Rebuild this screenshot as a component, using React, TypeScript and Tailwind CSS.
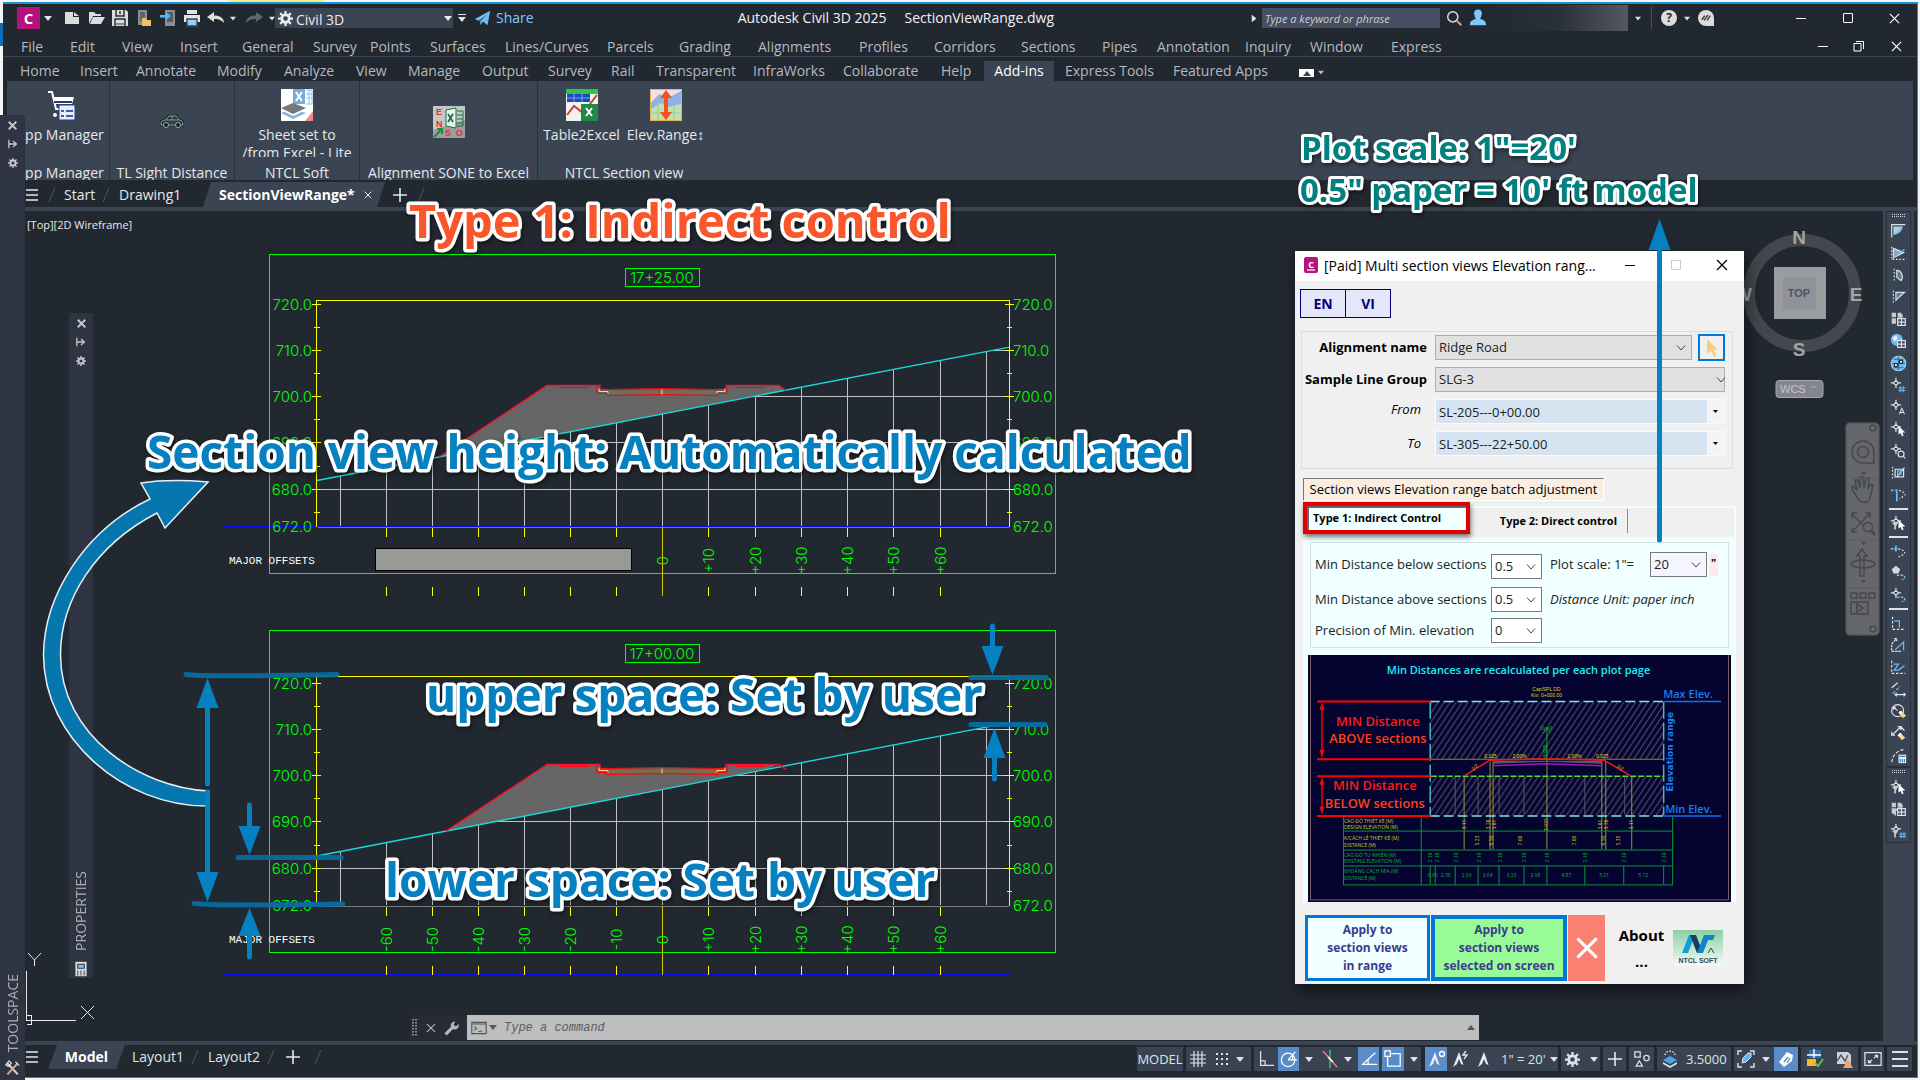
import React from 'react';

const OS = 'font-["Open_Sans",sans-serif]';

/* ---------- small shared pieces ---------- */

function Caret({ className = '' }: { className?: string }) {
  return (
    <svg viewBox="0 0 8 5" className={`h-[5px] w-2 shrink-0 ${className}`} fill="currentColor" aria-hidden="true">
      <path d="M0 0H8L4 5Z" />
    </svg>
  );
}

function Icon({ children, className = 'size-5', vb = '0 0 20 20' }: { children: React.ReactNode; className?: string; vb?: string }) {
  return (
    <svg viewBox={vb} className={`shrink-0 ${className}`} fill="none" stroke="currentColor" strokeWidth="1.4" aria-hidden="true">
      {children}
    </svg>
  );
}

function Btn({ label, className = '', children }: { label: string; className?: string; children: React.ReactNode }) {
  return (
    <button type="button" aria-label={label} className={`flex shrink-0 items-center justify-center ${className}`}>
      {children}
    </button>
  );
}

const Gear = ({ className = 'size-4' }: { className?: string }) => (
  <svg viewBox="0 0 16 16" className={`shrink-0 ${className}`} fill="none" stroke="currentColor" aria-hidden="true">
    <circle cx="8" cy="8" r="4" strokeWidth="3" />
    <path d="M8 0V3M8 13V16M0 8H3M13 8H16M2.3 2.3L4.5 4.5M11.5 11.5L13.7 13.7M2.3 13.7L4.5 11.5M11.5 4.5L13.7 2.3" strokeWidth="2.4" />
  </svg>
);

const Cross = ({ className = 'size-3' }: { className?: string }) => (
  <svg viewBox="0 0 12 12" className={`shrink-0 ${className}`} fill="none" stroke="currentColor" strokeWidth="1.3" aria-hidden="true">
    <path d="M1 1L11 11M11 1L1 11" />
  </svg>
);

/* ---------- title bar ---------- */

function TitleBar() {
  return (
    <header className="flex h-7 items-center text-[#dfe3e8]">
      <Btn label="Application menu" className="ml-[14px] h-[22px] w-[23px] bg-[#b5127f]">
        <span className="text-[15px] leading-none font-bold text-white">C</span>
      </Btn>
      <Caret className="ml-1" />
      <Btn label="New" className="ml-2 w-6">
        <Icon><path d="M3 4H11V9H17V16H3Z" fill="#dcdcdc" stroke="none" /><path d="M12 4L17 8H12Z" fill="#dcdcdc" stroke="none" /></Icon>
      </Btn>
      <Btn label="Open" className="w-6">
        <Icon><path d="M3 16V4H8L10 6H15V8H7Z" fill="#dcdcdc" stroke="none" /><path d="M7 9H19L15 16H4Z" fill="#dcdcdc" stroke="none" /></Icon>
      </Btn>
      <Btn label="Save" className="w-6">
        <Icon><path d="M2 2H16L18 4V18H2Z" fill="#dcdcdc" stroke="none" /><path d="M6 2V8H14V2M10 3V6M5 18V11H15V18" stroke="#222830" /><path d="M6 16H14" stroke="#5a6270" /></Icon>
      </Btn>
      <Btn label="Open from web and mobile" className="w-6">
        <Icon><rect x="4" y="2" width="9" height="15" fill="#8b8f94" stroke="none" /><path d="M6 4H11V13H6Z" fill="#60656c" stroke="none" /><path d="M8 18V10H12L13 12H17V18Z" fill="#f0c069" stroke="none" /></Icon>
      </Btn>
      <Btn label="Save to web and mobile" className="w-6">
        <Icon><rect x="7" y="2" width="10" height="16" fill="#8b8f94" stroke="none" /><path d="M9 4H15V14H9Z" fill="#555b64" stroke="none" /><path d="M2 7H8V4L13 8L8 12V9.5H2Z" fill="#5db7f2" stroke="none" /></Icon>
      </Btn>
      <Btn label="Plot" className="w-6">
        <Icon><path d="M5 2H15V6H5ZM2 7H18V14H2Z" fill="#e4e4e4" stroke="none" /><path d="M5 11H15V18H5Z" fill="#8fd0ff" stroke="#3b4453" /></Icon>
      </Btn>
      <Btn label="Undo" className="w-6">
        <Icon><path d="M1 9L8 4V7.500C14 7.500 18 10 18 15C15 11.500 12 11 8 11V14Z" fill="#dcdcdc" stroke="none" /></Icon>
      </Btn>
      <Caret className="ml-0.5 w-[6px]" />
      <Btn label="Redo" className="ml-1.5 w-6">
        <Icon><path d="M19 9L12 4V7.500C6 7.500 2 10 2 15C5 11.500 8 11 12 11V14Z" fill="#5f666f" stroke="none" /></Icon>
      </Btn>
      <Caret className="ml-[3px] w-[6px]" />
      <button type="button" className="flex h-5 w-[178px] items-center bg-[#3b4453] pr-px pl-[3px] text-sm text-[#e8ebef]">
        <Gear className="size-[15px]" />
        <span className="ml-[3px] pt-[3px] leading-5">Civil 3D</span>
        <Caret className="ml-auto" />
      </button>
      <span className="ml-[5px] flex flex-col items-center gap-[2px]" aria-hidden="true">
        <span className="h-px w-2 bg-current" />
        <Caret />
      </span>
      <button type="button" className="ml-2 flex items-center gap-1 text-sm text-[#7cc8ff]">
        <Icon className="size-[18px]"><path d="M1 11L18 2L15 18L10 14L7 18V13L15 6L5 13Z" fill="#6cbcf5" stroke="none" /></Icon>
        Share
      </button>
      <h1 className="ml-auto flex gap-[18px] text-sm text-[#f0f2f4]">
        <span>Autodesk Civil 3D 2025</span>
        <span>SectionViewRange.dwg</span>
      </h1>
      <Caret className="ml-[196px] -rotate-90" />
      <input
        aria-label="Search help"
        placeholder="Type a keyword or phrase"
        className="ml-1 h-5 w-[178px] bg-[#454f61] px-[3px] text-[11px] text-white italic placeholder:text-[#c9cdd3]"
      />
      <Icon className="ml-1.5 size-[17px]"><circle cx="8" cy="8" r="6" stroke="#d8dade" strokeWidth="1.800" /><path d="M13 13L18 18" stroke="#d2a06a" strokeWidth="2.500" /></Icon>
      <Icon className="ml-1.5 size-[18px]"><path d="M10 0.500C14 0.500 15 4 14 7C13.500 9 12.500 10 12.500 11C16 12 19 13 19 18H1C1 13 4 12 7.500 11C7.500 10 6.500 9 6 7C5 4 6 0.500 10 0.500Z" fill="#7cc8ff" stroke="none" /></Icon>
      <span className="h-[26px] w-[141px] bg-linear-to-r from-[#222830] via-[#2a3038] to-[#555a62]" aria-hidden="true" />
      <Caret className="ml-[7px] w-[6px]" />
      <span className="ml-2.5 h-[22px] w-px bg-[#4a505a]" />
      <Btn label="Help" className="ml-[9px] size-4 rounded-full bg-[#dcdcdc]">
        <span className="text-xs leading-none font-bold text-[#222830]">?</span>
      </Btn>
      <Caret className="ml-[7px] w-[6px]" />
      <Btn label="Autodesk account" className="ml-2 size-4 rounded-full rounded-br-none bg-[#dcdcdc]">
        <Icon className="size-3 text-[#444]"><path d="M3 13L8 6M7 14L13 5M12 14L17 6" strokeWidth="2.500" /></Icon>
      </Btn>
      <Btn label="Minimize" className="ml-[76px] w-[22px]"><span className="h-px w-2.5 bg-white" /></Btn>
      <Btn label="Maximize" className="ml-[25px] w-[22px]"><span className="size-2.5 rounded-[1px] border border-white" /></Btn>
      <Btn label="Close" className="mr-3 ml-6 w-[22px] text-white"><Cross className="size-[11px]" /></Btn>
    </header>
  );
}

/* ---------- menu bar and ribbon ---------- */

const menus: [string, string][] = [
  ['File', 'w-[49px]'], ['Edit', 'w-[52px]'], ['View', 'w-[58px]'], ['Insert', 'w-[62px]'], ['General', 'w-[71px]'],
  ['Survey', 'w-[57px]'], ['Points', 'w-[60px]'], ['Surfaces', 'w-[75px]'], ['Lines/Curves', 'w-[102px]'],
  ['Parcels', 'w-[72px]'], ['Grading', 'w-[79px]'], ['Alignments', 'w-[101px]'], ['Profiles', 'w-[75px]'],
  ['Corridors', 'w-[87px]'], ['Sections', 'w-[81px]'], ['Pipes', 'w-[55px]'], ['Annotation', 'w-[88px]'],
  ['Inquiry', 'w-[65px]'], ['Window', 'w-[81px]'], ['Express', 'w-[60px]'],
];

const ribbonTabs: [string, string][] = [
  ['Home', 'w-[60px]'], ['Insert', 'w-[56px]'], ['Annotate', 'w-[81px]'], ['Modify', 'w-[67px]'], ['Analyze', 'w-[72px]'],
  ['View', 'w-[52px]'], ['Manage', 'w-[74px]'], ['Output', 'w-[66px]'], ['Survey', 'w-[63px]'], ['Rail', 'w-[45px]'],
  ['Transparent', 'w-[97px]'], ['InfraWorks', 'w-[90px]'], ['Collaborate', 'w-[98px]'], ['Help', 'w-[43px]'],
  ['Add-ins', 'w-[70px]'], ['Express Tools', 'w-[108px]'], ['Featured Apps', 'w-[127px]'],
];

function MenuBar() {
  return (
    <nav className="flex h-[25px] items-end border-b border-[#3b4453] pl-[18px] text-sm leading-[18px] text-[#b4b9c0]">
      {menus.map(([t, w]) => (
        <button key={t} type="button" className={`${w} shrink-0 text-left whitespace-nowrap`}>{t}</button>
      ))}
      <span className="ml-auto flex items-center pb-1 text-white">
        <Btn label="Minimize drawing" className="w-[22px]"><span className="h-px w-2.5 bg-white" /></Btn>
        <Btn label="Restore drawing" className="ml-[14px] w-[22px]">
          <Icon className="size-3" vb="0 0 12 12"><path d="M1 3.500H8V11H1ZM3 1.500H10.500V9" strokeWidth="1" /></Icon>
        </Btn>
        <Btn label="Close drawing" className="mr-2.5 ml-[15px] w-[22px]"><Cross className="size-[11px]" /></Btn>
      </span>
    </nav>
  );
}

function RibbonTabs() {
  return (
    <nav className="flex h-6 items-end pl-[17px] text-sm text-[#b4b9c0]">
      {ribbonTabs.map(([t, w]) =>
        t === 'Add-ins' ? (
          <button key={t} type="button" className={`${w} h-5 shrink-0 bg-[#3b4453] text-center leading-5 text-white`}>{t}</button>
        ) : (
          <button key={t} type="button" className={`${w} h-5 shrink-0 text-left leading-5 whitespace-nowrap ${t === 'Express Tools' || t === 'Featured Apps' ? 'pl-[11px]' : ''}`}>{t}</button>
        ),
      )}
      <Btn label="Ribbon display" className="mb-1 ml-[10px] h-2 w-[15px] bg-white text-[#444]"><Caret className="h-1 w-1.5 rotate-180" /></Btn>
      <Caret className="mb-1.5 ml-1 w-[6px]" />
    </nav>
  );
}

function RibbonPanel({ title, className, children }: { title: string; className: string; children: React.ReactNode }) {
  return (
    <section className={`flex h-full shrink-0 flex-col border-r border-[#2a313c] pt-2 ${className}`}>
      <div className="flex h-[75px] shrink-0 justify-center overflow-hidden">{children}</div>
      <h2 className="text-center leading-[18px] whitespace-nowrap">{title}</h2>
    </section>
  );
}

function Tool({ icon, label, className = '' }: { icon: React.ReactNode; label?: React.ReactNode; className?: string }) {
  return (
    <button type="button" className={`flex flex-col items-center ${className}`}>
      {icon}
      {label && <span className="mt-[5px] h-[31px] overflow-hidden leading-[18px] whitespace-nowrap">{label}</span>}
    </button>
  );
}

function Ribbon() {
  return (
    <div className="mr-1 ml-1 flex h-[99px] overflow-hidden bg-[#3b4453] text-sm text-[#e6e9ed]">
      <RibbonPanel title="App Manager" className="w-[103px] pl-1">
        <Tool
          label="App Manager"
          icon={
            <svg viewBox="0 0 32 32" className="h-8 w-8" aria-hidden="true">
              <path d="M4 3H8L12 20H25" fill="none" stroke="#fff" strokeWidth="2" />
              <path d="M9 8H30L28 15H11Z" fill="#fff" />
              <path d="M10 13H28" stroke="#2b3a78" strokeWidth="2" />
              <circle cx="11" cy="26" r="2" fill="#fff" />
              <path d="M15 16H31V31H15Z" fill="#e9eef8" stroke="#27407e" />
              <path d="M17 21H20V23H17ZM17 26H20V28H17ZM22 21H29V23H22ZM22 26H29V28H22Z" fill="#2f63b5" />
            </svg>
          }
        />
      </RibbonPanel>
      <RibbonPanel title="TL Sight Distance" className="w-[125px]">
        <Tool
          className="self-center pb-3"
          icon={
            <svg viewBox="0 0 24 16" className="h-4 w-6" fill="none" stroke="#141a20" strokeWidth="2.600" aria-hidden="true">
              <path d="M1 11C1 8 3 7 6 7L9 3H16L19 7C22 7 23 9 23 12H1ZM6 7H19M12 3V7" />
              <path d="M1 11C1 8 3 7 6 7L9 3H16L19 7C22 7 23 9 23 12H1ZM6 7H19M12 3V7" stroke="#8fb3ab" strokeWidth="1" />
              <circle cx="6" cy="12" r="2.500" fill="#141a20" stroke="#8fb3ab" strokeWidth="1" />
              <circle cx="18" cy="12" r="2.500" fill="#141a20" stroke="#8fb3ab" strokeWidth="1" />
            </svg>
          }
        />
      </RibbonPanel>
      <RibbonPanel title="NTCL Soft" className="w-[125px]">
        <Tool
          label={<>Sheet set to<br />/from Excel - Lite</>}
          icon={
            <svg viewBox="0 0 32 32" className="h-8 w-8" aria-hidden="true">
              <rect width="32" height="32" fill="#fff" />
              <path d="M12 0H24V15H12Z" fill="#74acdf" />
              <path d="M15 3L21 12M21 3L15 12" stroke="#fff" strokeWidth="2" />
              <path d="M25 1H31V15H25M25 5H31M25 9H31M28 1V15" fill="none" stroke="#8fc0ea" />
              <path d="M0 24L12 20L25 24L12 30Z" fill="#86b5e0" />
              <path d="M0 21L12 17L25 21L12 27Z" fill="#fff" />
              <path d="M0 19L12 14L25 19L12 25Z" fill="#777" />
              <path d="M24 32L32 22V32Z" fill="#e64a4a" opacity=".65" />
            </svg>
          }
        />
      </RibbonPanel>
      <RibbonPanel title="Alignment SONE to Excel" className="w-[178px]">
        <Tool
          className="pt-[17px]"
          icon={
            <svg viewBox="0 0 32 32" className="h-8 w-8" aria-hidden="true">
              <rect width="32" height="32" fill="#9a9c9e" />
              <path d="M0 0H32V14L0 24Z" fill="#c4c6c7" />
              <path d="M13 4L23 2V22L13 20Z" fill="#e9f1ec" stroke="#1e7145" />
              <path d="M15 8L20 16M20 8L15 16" stroke="#1e7145" strokeWidth="1.800" />
              <path d="M24 5H30V20H24M24 9H30M24 13H30M24 17H30" fill="none" stroke="#1e7145" />
              <path d="M1 31L9 23M4 23H9V28" stroke="#1a8f3c" strokeWidth="2" fill="none" />
              <g fill="#f02a2a" fontFamily="Liberation Sans" fontSize="9" fontWeight="700">
                <text x="3" y="9">E</text><text x="3" y="21">N</text><text x="12" y="30">S</text><text x="23" y="30">O</text>
              </g>
            </svg>
          }
        />
      </RibbonPanel>
      <section className="flex w-[172px] shrink-0 flex-col pt-2">
        <div className="flex h-[75px] shrink-0 overflow-hidden">
          <Tool
            className="w-[87px]"
            label="Table2Excel"
            icon={
              <svg viewBox="0 0 32 32" className="h-8 w-8" aria-hidden="true">
                <rect width="32" height="32" fill="#f1f3ee" />
                <path d="M0 0H32V5H0Z" fill="#35c24a" />
                <path d="M1 5H24V13H1Z" fill="#1a49c4" />
                <path d="M1 9H24M8 5V13M16 5V13" stroke="#7fa2ef" />
                <path d="M1 26L8 17L17 24L31 6" fill="none" stroke="#d23b3b" strokeWidth="2" />
                <path d="M15 15H32V32H15Z" fill="#1e8a43" />
                <path d="M20 19L26 27M26 19L20 27" stroke="#fff" strokeWidth="2" />
              </svg>
            }
          />
          <Tool
            className="w-[81px]"
            label="Elev.Range↕"
            icon={
              <svg viewBox="0 0 32 32" className="h-8 w-8" aria-hidden="true">
                <rect x=".5" y=".5" width="31" height="31" fill="#f7dfe2" stroke="#eab25a" />
                <path d="M1 14L9 5L18 9L31 2V31H1Z" fill="#8fb2e2" />
                <path d="M1 20L11 14L19 18L31 15V31H1Z" fill="#bfe0b0" />
                <path d="M1 24H31M8 14V31M24 16V31" stroke="#9ccb90" />
                <path d="M16 1L22 9H18V23H22L16 31L10 23H14V9H10Z" fill="#f4511e" />
              </svg>
            }
          />
        </div>
        <h2 className="text-center leading-[18px]">NTCL Section view</h2>
      </section>
    </div>
  );
}

/* ---------- document tabs ---------- */

const Slash = () => (
  <svg viewBox="0 0 8 16" className="h-4 w-2 shrink-0" stroke="#4d5562" aria-hidden="true"><path d="M7 1L1 15" /></svg>
);
const Burger = () => (
  <svg viewBox="0 0 12 12" className="size-3 shrink-0" stroke="#e6e9ed" strokeWidth="1.600" aria-hidden="true"><path d="M0 1H12M0 6H12M0 11H12" /></svg>
);
const Plus = () => (
  <svg viewBox="0 0 14 14" className="size-3.5 shrink-0" stroke="#e6e9ed" strokeWidth="1.600" aria-hidden="true"><path d="M7 0V14M0 7H14" /></svg>
);

function DocTabs() {
  return (
    <nav className="flex h-[31px] items-center border-b-4 border-[#3b4453] pt-0.5 pl-[23px] text-sm text-[#e6e9ed]">
      <Btn label="Drawing list"><Burger /></Btn>
      <span className="ml-2.5"><Slash /></span>
      <button type="button" className="ml-2 w-[38px] text-left">Start</button>
      <Slash />
      <button type="button" className="ml-[9px] w-[84px] text-left">Drawing1</button>
      <button type="button" className="flex h-[25px] w-[182px] items-center justify-between self-end bg-[#3b4453] pr-[13px] pl-4 font-bold text-white [clip-path:polygon(8px_0,100%_0,calc(100%-8px)_100%,0_100%)]">
        SectionViewRange*
        <Cross className="size-2" />
      </button>
      <Btn label="New drawing" className="ml-2"><Plus /></Btn>
      <span className="ml-2.5"><Slash /></span>
    </nav>
  );
}

/* ---------- section views drawing ---------- */

const colX = [340, 386, 432, 478, 524, 570, 616, 662, 708, 755, 801, 847, 893, 940, 986];
const offsetNames = ['', '-60', '-50', '-40', '-30', '-20', '-10', '0', '+10', '+20', '+30', '+40', '+50', '+60', ''];

function SectionView({ station, top, frameTop, y720, ground, hideLeft }: { station: string; top: number; frameTop: number; y720: number; ground: number; hideLeft?: boolean }) {
  const elev = (e: number) => Math.round(y720 + (720 - e) * 4.63) + 0.5;
  const gy = (x: number) => ground - (x - 662) * 0.1927;
  const gx = (y: number) => 662 + (ground - y) / 0.1927;
  const base = elev(672);
  const r = elev(702.4);
  const toe = Math.round((r - ground + 240) / 0.482);
  return (
    <g fill="none" shapeRendering="crispEdges">
      {colX.map((x) => <path key={x} d={`M${x + 0.5} ${gy(x)}V${base}`} stroke="#bfc1c4" />)}
      {[680, 690, 700, 710].map((e) => <path key={e} d={`M${Math.max(317, gx(elev(e)))} ${elev(e)}H1009`} stroke="#bfc1c4" />)}
      <path d={`M317 ${base + 1}H1009`} stroke="#777" />
      <path d={`M${toe} ${gy(toe)}L547 ${r}H600V${r + 4}H607L662 ${r + 3}L718 ${r + 4}H726V${r}H779L${gx(r + 5)} ${r + 5}Z`} fill="#666" shapeRendering="auto" />
      <g shapeRendering="auto">
        <path d={`M317 ${gy(317)}L1009.500 ${gy(1009)}`} stroke="#19dada" strokeWidth="1.400" />
        <path d={`M608 ${r + 7}H717`} stroke="#7d6c48" strokeWidth="3" />
        <path d={`M${toe} ${gy(toe)}L547 ${r}H600V${r + 4}H607M718 ${r + 4}H726V${r}H779L786 ${r + 5}`} stroke="#f3122d" strokeWidth="1.400" />
        <path d={`M560 ${r + 2}H590M736 ${r + 2}H766M597 ${r + 1}V${r + 8}H607V${r + 10}L662 ${r + 9}L718 ${r + 10}V${r + 8}H727V${r + 1}M607 ${r + 4}L662 ${r + 3}L718 ${r + 4}`} stroke="#ff0014" strokeWidth="1.200" />
        <path d={`M599 ${r + 3}V${r + 6}H608V${r + 8}M725 ${r + 3}V${r + 6}H717V${r + 8}M662 ${r + 4}V${r + 9}`} stroke="#ffe066" />
      </g>
      <path d={`M317 ${base}H1009.500V${base + 69}H223.500V${base}H317V${base + 69}`} stroke="#0b0bff" />
      <rect x="269.500" y={frameTop + 0.5} width="786" height={base + 46 - frameTop} stroke="#00ff00" />
      <path d={`M316.500 ${base}V${top}H1009.500V${base}`} stroke="#ffff00" />
      {[720, 710, 700, 690, 680].map((e) => <path key={e} d={`M312 ${elev(e)}H321M1005 ${elev(e)}H1014`} stroke="#ffff00" />)}
      {[715, 705, 695, 685, 675].map((e) => <path key={e} d={`M314 ${elev(e)}H320M1007 ${elev(e)}H1012`} stroke="#ffff00" />)}
      {colX.slice(1, 14).map((x) => <path key={x} d={`M${x + 0.5} ${base + 1}V${base + 10}M${x + 0.5} ${base + 60}V${base + 69}`} stroke="#ffff00" />)}
      <path d={`M662.500 ${base}V${base + 69}`} stroke="#d6c800" />
      <rect x="625.500" y={frameTop + 14.5} width="74" height="18" stroke="#00ff00" />
      <g fill="#00ff00" fontFamily="Inter, sans-serif" fontSize="15" fontWeight="300" shapeRendering="auto">
        <text x="662" y={frameTop + 29} textAnchor="middle">{station}</text>
        {[720, 710, 700, 690, 680, 672].map((e) => (
          <React.Fragment key={e}>
            <text x="312" y={elev(e) + 5} textAnchor="end">{e}.0</text>
            <text x="1013" y={elev(e) + 5}>{e}.0</text>
          </React.Fragment>
        ))}
        {offsetNames.map((t, i) => t && !(hideLeft && i < 7) && (
          <text key={t} transform={`translate(${colX[i] + 6} ${base + 34}) rotate(-90)`} textAnchor="middle">{t}</text>
        ))}
      </g>
      <text x="229" y={base + 37} fill="#fff" fontFamily="Liberation Mono, monospace" fontSize="11">MAJOR OFFSETS</text>
      {hideLeft && <rect x="375.500" y={base + 22} width="256" height="22" fill="#999" stroke="#000" />}
    </g>
  );
}

function Drawing() {
  return (
    <svg viewBox="3 211 1880 830" className="absolute top-0 left-0 h-[830px] w-[1880px]" role="img" aria-label="Section views">
      <SectionView station="17+25.00" top={300.5} frameTop={254} y720={303.5} ground={414} hideLeft />
      <SectionView station="17+00.00" top={676.5} frameTop={630} y720={682.5} ground={789.5} />
      <g stroke="#e6e9ed" fill="none" shapeRendering="crispEdges">
        <path d="M26.500 971V1020.500H76M26.500 1015.500H31.500V1024.500H26.500" />
        <path d="M28 953L34.500 960L41 953M34.500 960V966M81 1006L94 1019M94 1006L81 1019" shapeRendering="auto" />
      </g>
      {/* view cube */}
      <circle cx="1802" cy="293" r="53" fill="none" stroke="#44474d" strokeWidth="12" />
      <rect x="1774" y="267" width="52" height="52" fill="#9b9c9d" />
      <rect x="1783" y="277" width="33" height="32" fill="#8e939a" />
      <g fontFamily="Liberation Sans, sans-serif" fontWeight="700" textAnchor="middle" fill="#a2a4a6">
        <text x="1799" y="297" fontSize="11" fill="#4f545c">TOP</text>
        <text x="1799" y="244" fontSize="19">N</text>
        <text x="1799" y="356" fontSize="19">S</text>
        <text x="1856" y="301" fontSize="19">E</text>
        <text x="1743" y="301" fontSize="19">W</text>
      </g>
      <rect x="1776" y="380.500" width="47" height="17" rx="3" fill="#84858f" stroke="#a6a7ad" />
      <text x="1780" y="393" fontSize="11" fontFamily="Liberation Sans, sans-serif" fill="#c5c6cc">WCS</text>
      <path d="M1811 387H1817" stroke="#b0b1b8" />
      {/* navigation bar */}
      <g fill="none" stroke="#45484c" strokeWidth="1.500">
        <rect x="1846" y="423" width="33" height="212" rx="4" fill="#65676a" stroke="#53565a" />
        <circle cx="1873" cy="428" r="3" /><circle cx="1873" cy="629" r="3" />
        <path d="M1874 452A11 11 0 1 0 1863 463H1874Z" /><circle cx="1863" cy="452" r="5.500" />
        <path d="M1855 494C1852 490 1851 487 1853 486L1857 490L1855 480L1858 480L1860 488V477H1863L1864 488L1866 478H1869L1868 489L1871 484L1873 485L1870 498C1868 504 1860 505 1855 494Z" />
        <path d="M1852 514L1870 532M1870 513L1852 532M1852 518V513H1857M1865 513H1870V518M1852 528V532H1857" /><circle cx="1868" cy="527" r="4.500" fill="#65676a" /><path d="M1871 531L1875 535" strokeWidth="2.500" />
        <ellipse cx="1863" cy="564" rx="12" ry="4" /><path d="M1860 576V556H1857L1862 549L1867 556H1864V576Z" />
        <path d="M1851 593H1857V598H1851ZM1860 593H1866V598H1860ZM1869 593H1875V598H1869ZM1851 602H1868V614H1851ZM1857 604V612L1863 608Z" />
        <path d="M1847 478H1878M1847 540H1878M1847 588H1878" stroke="#5b5d60" strokeWidth="1" />
      </g>
      <path d="M1861 472H1866L1863.500 475ZM1861 542H1866L1863.500 545ZM1861 580H1866L1863.500 583Z" fill="#44474b" />
    </svg>
  );
}

/* ---------- dialog ---------- */

const Chevron = ({ className = '' }: { className?: string }) => (
  <svg viewBox="0 0 10 6" className={`pointer-events-none absolute h-1.5 w-2.5 ${className}`} fill="none" stroke="#444" aria-hidden="true"><path d="M1 .5L5 5L9 .5" /></svg>
);

function Combo({ id, value, className }: { id: string; value: string; className: string }) {
  return (
    <span className="relative flex items-center">
      <select id={id} defaultValue={value} className={`appearance-none pl-[3px] text-[13px] text-[#222] ${className}`}>
        <option>{value}</option>
      </select>
      <Chevron className="right-1.5" />
    </span>
  );
}

function StationBox({ id, value }: { id: string; value: string }) {
  return (
    <span className="flex h-[25px] w-[290px] border border-[#f8fafc] bg-[#d6e4f2]">
      <input id={id} defaultValue={value} className="min-w-0 flex-1 bg-transparent px-[3px] pt-0.5 text-[13px] text-[#222]" />
      <Btn label={`Choose ${value}`} className="w-[17px] bg-[#f4f4f6] text-black"><Caret className="h-[3px] w-[5px]" /></Btn>
    </span>
  );
}

const values1: [number, string][] = [[157, '3.11'], [181, '3.78'], [187, '3.81'], [240, '3.935'], [294, '3.81'], [300, '3.78'], [325, '3.11']];
const values2: [number, string][] = [[170, '5.23'], [184, '0.50'], [214, '7.00'], [268, '7.00'], [297, '0.50'], [312, '5.35']];
const values3 = [123, 130, 149, 172, 193, 218, 241, 279, 318, 358];
const values4: [number, string][] = [[125, '0.60'], [138, '2.38'], [159, '2.93'], [180, '2.64'], [204, '3.23'], [228, '2.98'], [259, '4.87'], [297, '5.01'], [336, '5.12']];

function Preview() {
  return (
    <svg viewBox="0 0 424 248" className="block w-full" role="img" aria-label="Minimum distances above and below sections">
      <defs>
        <pattern id="hatch" width="6" height="9" patternUnits="userSpaceOnUse">
          <path d="M-1 10.500L7 -1.500M-4 6L1 -1.500M5 10.500L10 3" stroke="#80838d" strokeWidth=".8" />
        </pattern>
      </defs>
      <rect width="424" height="248" fill="#050330" />
      <path d="M2.500 0V245.500H421.500V0" fill="none" stroke="#77605f" />
      <text x="211" y="19" textAnchor="middle" fill="#19f0f5" fontFamily="Open Sans" fontSize="11" fontWeight="600">Min Distances are recalculated per each plot page</text>
      <g fontFamily="Liberation Sans" fontSize="5" fill="#d8d82a" textAnchor="middle">
        <text x="239" y="36">Cap/SPL DD</text><text x="239" y="42">Km: 0+000.00</text>
      </g>
      <rect x="123" y="47" width="234" height="57" fill="url(#hatch)" />
      <rect x="123" y="122" width="234" height="39" fill="url(#hatch)" />
      <path d="M123 104.500H357" stroke="#b5762d" />
      <path d="M147.500 122V160M170.500 122V160M191.500 122V160M216.500 122V160M277.500 122V160M317.500 122V160" stroke="#55576b" />
      <path d="M156.500 122V176M182.500 107V195M185.500 107V195M294.500 107V195M298.500 107V195M324.500 122V195M239.500 104V195M156.500 176V195" stroke="#9c9140" />
      <path d="M123 121.500H357" stroke="#57d83c" strokeDasharray="6 2" strokeWidth="1.500" />
      <path d="M122.500 47V161M356.500 47V161" stroke="#44b8c4" strokeDasharray="17 4" strokeWidth="1.500" />
      <path d="M122 46.500H357M122 161.500H357" stroke="#7fe6ea" strokeDasharray="10 4" strokeWidth="1.500" />
      <path d="M185 106H295V109L239 107L185 109Z" fill="#555a68" />
      <path d="M185 111L239 109L295 111" fill="none" stroke="#a018b8" strokeWidth="1.500" />
      <path d="M157 121L182 105.500L239 104L297 105.500L323 121" fill="none" stroke="#f01818" strokeWidth="1.500" />
      <path d="M239.500 75V104M236 78L239.500 73L243 78" fill="none" stroke="#17a82c" />
      <g fontFamily="Liberation Sans" fontSize="5" fill="#e0d820" textAnchor="middle">
        <text x="183" y="103">0.025</text><text x="212" y="103">2.00%</text><text x="267" y="103">2.00%</text><text x="295" y="103">0.025</text>
        <text x="168" y="114" transform="rotate(-35 168 114)">1/2</text><text x="312" y="114" transform="rotate(35 312 114)">1/2</text>
        <text x="239" y="75" fill="#17a82c">Dc=0</text>
        <text transform="translate(240 96) rotate(-90)" fill="#17c82c">3.935</text>
      </g>
      <path d="M9 46.500H123M9 104.500H123M9 121.500H123M9 161.500H123" stroke="#ff0000" strokeWidth="2" />
      <path d="M14 50V101M14 125V158" stroke="#ff0000" strokeWidth="1.500" />
      <path d="M14 47L11.500 55H16.500ZM14 103L11.500 95H16.500ZM14 122L11.500 130H16.500ZM14 160L11.500 152H16.500Z" fill="#ff0000" />
      <g fontFamily="Open Sans" fontSize="13" fontWeight="600" textAnchor="middle">
        <text x="70" y="71" fill="#ff1a12">MIN Distance</text><text x="70" y="88" fill="#fb4313">ABOVE sections</text>
        <text x="67" y="135" fill="#ff1a12">MIN Distance</text><text x="67" y="153" fill="#fb4313">BELOW sections</text>
      </g>
      <g fontFamily="Open Sans" fontSize="11" fontWeight="600" fill="#1580f5">
        <text x="356" y="43">Max Elev.</text><text x="358" y="158">Min Elev.</text>
        <text transform="translate(366 97) rotate(-90)" textAnchor="middle" fontFamily="DejaVu Sans" fontSize="9" fontWeight="700">Elevation range</text>
      </g>
      <path d="M357 46.500H414M357 161.500H414" stroke="#0b74ee" strokeWidth="1.500" />
      <path d="M35.500 162V230.500H365.500V162M35.500 176.500H365.500M35.500 195.500H365.500M35.500 211.500H365.500M113.500 162V230.500" fill="none" stroke="#0a9a35" />
      <path d="M122.500 211V230M127.500 211V230M147.500 211V230M170.500 211V230M191.500 211V230M216.500 211V230M239.500 211V230M277.500 211V230M316.500 211V230M356.500 211V230" stroke="#0a9a35" />
      <g fontFamily="Open Sans" fontSize="5" fill="#d0cc22">
        <text x="36" y="168">CAO ĐỘ THIẾT KẾ (M)</text><text x="36" y="174">DESIGN ELEVATION (M)</text>
        <text x="36" y="185">K/CÁCH LẺ THIẾT KẾ (M)</text><text x="36" y="192">DISTANCE (M)</text>
        <g textAnchor="middle">
          {values1.map(([x, t]) => <text key={x} transform={`translate(${x + 1} 170) rotate(-90)`}>{t}</text>)}
          {values2.map(([x, t]) => <text key={x} transform={`translate(${x + 1} 186) rotate(-90)`}>{t}</text>)}
        </g>
      </g>
      <g fontFamily="Open Sans" fontSize="5" fill="#12b03a">
        <text x="36" y="202">CAO ĐỘ TỰ NHIÊN (M)</text><text x="36" y="209">EXISTING ELEVATION (M)</text>
        <text x="36" y="219">KHOẢNG CÁCH MIA (M)</text><text x="36" y="226">DISTANCE (M)</text>
        <g textAnchor="middle">
          {values3.map((x) => <text key={x} transform={`translate(${x + 1} 203) rotate(-90)`}>2.18</text>)}
          {values4.map(([x, t]) => <text key={x} x={x} y="223">{t}</text>)}
        </g>
      </g>
    </svg>
  );
}

function Dialog() {
  return (
    <section
      role="dialog"
      aria-label="Multi section views Elevation range"
      className="absolute top-10 left-[1292px] flex w-[449px] flex-col bg-[#f0f0f0] text-[13px] text-black shadow-[2px_6px_16px_rgba(0,0,0,0.55)]"
    >
      <header className="flex h-[30px] items-center bg-white pr-4 pb-0.5 pl-[9px]">
        <span className="flex h-4 w-3.5 flex-col items-center justify-center rounded-[2px] bg-[#b5127f] text-[9px] leading-[9px] font-bold text-white">C<span className="h-[2px] w-2 bg-[#e7a6ce]" /></span>
        <h2 className="ml-1.5 text-[14px] whitespace-nowrap">[Paid] Multi section views Elevation rang...</h2>
        <Btn label="Minimize dialog" className="ml-auto w-3"><span className="h-px w-2.5 bg-black" /></Btn>
        <Btn label="Maximize dialog" className="ml-[34px] w-3"><span className="size-2.5 border border-[#ccc]" /></Btn>
        <Btn label="Close dialog" className="ml-[34px]"><Cross /></Btn>
      </header>
      <div className="flex pt-2 pl-[5px] font-bold text-[#00007e]">
        <button type="button" className="h-[29px] w-[46px] border border-[#00007e] bg-[#e6e6fa] text-sm">EN</button>
        <button type="button" className="-ml-px h-[29px] w-[46px] border border-[#00007e] bg-[#e6e6fa] text-sm">VI</button>
      </div>
      <form className="mt-[13px] mr-[11px] ml-1.5 grid h-[138px] grid-cols-[125px_1fr] content-start items-center gap-x-2 gap-y-[7px] border border-[#dcdcdc] pt-[3px]">
        <label htmlFor="alignment" className="text-right font-bold whitespace-nowrap">Alignment name</label>
        <span className="flex gap-1.5">
          <Combo id="alignment" value="Ridge Road" className="h-[25px] w-[257px] border border-[#adadad] bg-[#e1e1e1]" />
          <Btn label="Pick alignment" className="-my-px size-[27px] border-2 border-[#0078d7] bg-[#f0f0f0]">
            <Icon className="size-5"><path d="M5 1V16L9 12.500L12 19L14.500 18L11.500 11.500H16Z" fill="#f6cd82" stroke="none" /></Icon>
          </Btn>
        </span>
        <label htmlFor="slg" className="text-right font-bold whitespace-nowrap">Sample Line Group</label>
        <Combo id="slg" value="SLG-3" className="h-[25px] w-[290px] border border-[#adadad] bg-[#e1e1e1]" />
        <label htmlFor="from" className="pr-1.5 pb-1 text-right italic">From</label>
        <StationBox id="from" value="SL-205---0+00.00" />
        <label htmlFor="to" className="pr-1.5 text-right italic">To</label>
        <StationBox id="to" value="SL-305---22+50.00" />
      </form>
      <h3 className="mt-[9px] ml-2 h-[23px] w-[301px] border border-t-[#777] border-r-white border-b-white border-l-[#777] bg-[#faeee2] text-center leading-[21px] whitespace-nowrap">
        Section views Elevation range batch adjustment
      </h3>
      <div className="mx-2 mt-[5px] border-2 border-b-0 border-[#f0ffff] pb-0.5">
        <div role="tablist" className="-mt-[6px] -ml-0.5 flex h-8 text-[11px] font-bold">
          <div className="border-4 border-[#e00000] shadow-[1px_3px_5px_rgba(0,0,0,0.5)]">
            <button type="button" role="tab" aria-selected="true" className="h-6 w-[159px] border-t-2 border-l-2 border-[#667] bg-[#f0ffff] pb-0.5 pl-1 text-left">Type 1: Indirect Control</button>
          </div>
          <button type="button" role="tab" aria-selected="false" className="mt-[7px] ml-3 h-6 w-[146px] border-r border-[#888] pr-2.5 text-right">Type 2: Direct control</button>
        </div>
        <div className="mt-[3px] bg-[#f0ffff] pt-[5px]">
          <div className="mx-[5px] grid h-[106px] grid-cols-[176px_51px_1fr] content-start items-center gap-y-1.5 border border-[#d5e2e2] pt-[9px] pl-1 text-[#222]">
            <label htmlFor="below" className="pb-1 whitespace-nowrap">Min Distance below sections</label>
            <Combo id="below" value="0.5" className="h-[25px] w-[51px] border border-[#7a7a7a] bg-white" />
            <span className="flex items-center pb-1 pl-2">
              <label htmlFor="scale" className="w-[100px]">Plot scale: 1"=</label>
              <Combo id="scale" value="20" className="h-[25px] w-[57px] border border-[#7a7a7a] bg-[#f5f5ff]" />
              <span className="ml-0.5 h-[22px] w-[9px] bg-[#ffe9ee] text-center text-[11px] leading-[18px] font-bold text-black">"</span>
            </span>
            <label htmlFor="above" className="whitespace-nowrap">Min Distance above sections</label>
            <Combo id="above" value="0.5" className="h-[25px] w-[51px] border border-[#7a7a7a] bg-white" />
            <span className="pl-2 italic">Distance Unit: paper inch</span>
            <label htmlFor="precision" className="whitespace-nowrap">Precision of Min. elevation</label>
            <Combo id="precision" value="0" className="h-[25px] w-[51px] border border-[#7a7a7a] bg-white" />
          </div>
          <div className="mr-[3px] ml-[3px] pt-[7px]"><Preview /></div>
        </div>
      </div>
      <footer className="flex items-center pt-[11px] pb-[3px] pl-2.5 text-center text-[12px] leading-[18px] font-bold text-[#3d3a8c]">
        <button type="button" className="h-[66px] w-[125px] border-3 border-[#0078d7] bg-[#f0ffff]">Apply to<br />section views<br />in range</button>
        <button type="button" className="ml-px h-[66px] w-[136px] border-4 border-[#0078d7] bg-[#98fb98] whitespace-nowrap">Apply to<br />section views<br />selected on screen</button>
        <Btn label="Cancel" className="ml-px h-[66px] w-[37px] bg-[#fa8072] text-white">
          <Icon className="size-6"><path d="M2 2L18 18M18 2L2 18" strokeWidth="2.600" /></Icon>
        </Btn>
        <button type="button" className="ml-1.5 w-[61px] text-[15px] leading-[26px] text-black">About<br />...</button>
        <svg viewBox="0 0 50 36" className="ml-px h-9 w-[50px]" role="img" aria-label="NTCL SOFT">
          <defs><linearGradient id="logo" x1="0" y1="0" x2="0" y2="1"><stop offset="0" stopColor="#8ccfa4" /><stop offset="1" stopColor="#f4faf6" /></linearGradient></defs>
          <rect width="50" height="36" fill="url(#logo)" />
          <path d="M9 23L16 5H22L15 23Z" fill="#0f9fd8" /><path d="M17 5H23L30 23H24Z" fill="#123f66" /><path d="M24 23L31 5H42L40 10H35L30 23Z" fill="#0f86c9" />
          <path d="M35 23L38 18L41 23" stroke="#345" fill="none" />
          <text x="25" y="33" textAnchor="middle" fontSize="7" fontWeight="700" fontFamily="Liberation Sans" fill="#33475b">NTCL SOFT</text>
        </svg>
      </footer>
    </section>
  );
}

/* ---------- right tool strip ---------- */

const W = '#dfe2e6';
const B = '#6cbcf5';
const node = <path d="M7 1V4M7 10V13M1 7H4M10 7H13M4 7L7 4L10 7L7 10Z" stroke={W} />;
const funnel = <path d="M2 9H10L7 12V17H5V12Z" fill="#c9ccd0" stroke="none" />;
const cursor = <path d="M10 6V16L12.500 14L14 18L16 17L14.500 13.500H18Z" fill="#fff" stroke="none" />;
const table = <path d="M9 9H18V17H9ZM9 13H18M13.500 9V17" stroke={W} fill="#3b4453" />;
const sheet = <><path d="M2 2H7V15H2ZM9 2H13L15 5V8H9Z" fill="#c9ccd0" stroke="none" /><path d="M2 8H8" stroke="#3b4453" /></>;

const stripA: React.ReactNode[][] = [
  [
    <><path d="M2 17V2H18" stroke={W} /><path d="M4 4H15C14 10 10 13 4 14Z" fill="#a9cfe8" stroke="none" /><path d="M6 13C10 11 13 8 14 4" stroke={B} /></>,
    <><path d="M2 2V17H18" stroke={W} strokeDasharray="2 2" /><path d="M4 4L16 9L4 15Z" fill="#8fa6b8" stroke={W} /><path d="M4 15L17 5" stroke={B} /></>,
    <><path d="M5 2V18" stroke={W} strokeDasharray="2 2" /><path d="M8 4C14 4 16 12 13 16L8 12Z" fill="#5c7c98" stroke={W} /></>,
    <><path d="M4 2V18" stroke={W} strokeDasharray="2 2" /><path d="M7 4H17L7 13Z" fill="#5d7388" stroke={W} /><path d="M8 12L13 6" stroke={B} /></>,
    <>{sheet}{table}</>,
    <><circle cx="8" cy="8" r="7" fill={B} stroke="none" /><path d="M3 5L8 3L9 7L5 10ZM10 9L14 7L13 12Z" fill="#e9f4fb" stroke="none" />{table}</>,
    <><circle cx="10" cy="10" r="8.500" fill={B} stroke="#9bd4fb" /><path d="M2 10H18M10 2V18M4 5H16M4 15H16" stroke="#2f5f85" strokeWidth="1" /><circle cx="7" cy="12" r="2" stroke="#14202c" fill="#fff" /><circle cx="13" cy="8" r="2" stroke="#14202c" fill="#fff" /></>,
    <>{node}<path d="M12 11V18M15.500 11V18M10 13H18M10 16H18" stroke={B} strokeWidth="1.200" /></>,
    <>{node}<path d="M11 18L14 11L17 18M12 16H16" stroke={W} strokeWidth="1.200" /></>,
    <>{node}{cursor}</>,
    <>{node}<circle cx="13" cy="13" r="3.500" stroke={W} /><path d="M15.500 15.500L18 18" stroke={W} /></>,
    <><path d="M3 2V18" stroke={W} strokeDasharray="2 2" /><path d="M6 5H16V14H6ZM8 14L17 3" stroke={W} /><path d="M9 7H13V11H9Z" stroke={B} /></>,
    <><path d="M1 4H10" stroke={B} strokeWidth="2" strokeDasharray="3 2" /><path d="M8 5V17" stroke={B} strokeWidth="2" /><path d="M11 4C16 6 20 8 16 11C14 12 12 13 11 14" stroke={W} strokeDasharray="2 2" /></>,
  ],
  [<>{node}{funnel}{cursor}</>],
  [
    <><path d="M1 7H10M7 3V10" stroke={B} strokeWidth="2" strokeDasharray="3 1" /><path d="M10 7C16 8 20 11 15 14L9 17" stroke={W} strokeDasharray="2 2" /></>,
    <><path d="M7 1L12 5L10 10H4L2 5Z" fill="#d5d8dc" stroke="none" /><path d="M8 12H14C19 12 18 17 14 17" stroke={B} strokeDasharray="3 1.500" strokeWidth="1.800" /></>,
    <>{node}<path d="M8 12H14C19 12 18 17 14 17" stroke={B} strokeDasharray="3 1.500" strokeWidth="1.800" /></>,
  ],
  [
    <><path d="M3 2V17H18" stroke={W} strokeDasharray="3 2" /><path d="M5 7H11V15" stroke={B} /></>,
    <><path d="M2 9V17H14M2 8L8 2M5 2H8V5" stroke={W} strokeDasharray="3 1" /><path d="M6 15L16 6V16" stroke={B} /></>,
    <><path d="M2 2V17H18" stroke={W} strokeDasharray="3 2" /><path d="M4 6H10L5 13H10L17 8" stroke={B} /></>,
    <><path d="M2 8L9 2M6 16H18M8 14L6 16L8 18M16 14L18 16L16 18" stroke={W} /><path d="M3 15L12 6" stroke={B} strokeDasharray="4 2" /></>,
    <><circle cx="9" cy="9" r="7" stroke={W} /><path d="M9 9L4 5M4 8V5H7" stroke={W} /><path d="M10 11L13 9L19 15L15 18Z" fill="#f6d38c" stroke="none" /><path d="M10 11L13 9L15 11L12 13.500Z" fill="#fff" stroke="none" /></>,
    <><path d="M2 12L13 2L17 7M2 8V12H6M13 6V2H9" stroke={W} /><path d="M9 12L12 9L18 15L14 18Z" fill="#f6d38c" stroke="none" /><path d="M9 12L12 9L14 11L11 14Z" fill="#fff" stroke="none" /></>,
    <><path d="M2 18C3 10 8 4 17 3" stroke={W} strokeDasharray="4 2" /><rect x="10" y="9" width="9" height="10" fill="#e9f4fb" stroke="none" /><path d="M11 11H18M12 14V18M14.500 14V18M17 14V18" stroke="#2f86d0" /></>,
  ],
];
const stripB: React.ReactNode[] = [<>{node}{funnel}{cursor}</>, <>{sheet}{funnel}{table}</>, <>{node}{funnel}<path d="M13 11V18M16.500 11V18M11 13H19M11 16H19" stroke={B} strokeWidth="1.200" /></>];

const Grip = () => <span className="mt-[2px] mb-[3px] h-[3px] w-[13px] border-y border-dotted border-[#d0d3d8]" />;

function ToolStrip() {
  return (
    <aside className="flex w-[31px] shrink-0 flex-col items-center bg-[#3b4453] text-white">
      <div className="flex w-[25px] flex-col items-center border border-[#28303b]">
        <Grip />
        {stripA.map((g, i) => (
          <React.Fragment key={i}>
            {i > 0 && <span className="my-[2px] h-0.5 w-[19px] bg-[#dfe2e6]" />}
            {g.map((ic, j) => (
              <Btn key={j} label={`Transparent command ${i + 1}.${j + 1}`} className="h-[22px]"><Icon className="size-[17px]">{ic}</Icon></Btn>
            ))}
          </React.Fragment>
        ))}
      </div>
      <div className="flex w-[25px] flex-col items-center border border-[#28303b]">
        <Grip />
        {stripB.map((ic, j) => (
          <Btn key={j} label={`Filter command ${j + 1}`} className="h-[22px]"><Icon className="size-[17px]">{ic}</Icon></Btn>
        ))}
      </div>
    </aside>
  );
}

/* ---------- command line and status bar ---------- */

function CommandLine() {
  return (
    <div className="absolute bottom-px left-[407px] flex h-[25px] w-[1069px] items-center">
      <div className="flex h-full w-[57px] shrink-0 items-center gap-2 bg-[#262b35] pl-0.5 text-[#b4b7bb]">
        <Icon className="h-[18px] w-1.5" vb="0 0 6 18"><path d="M1 0V18M4 0V18" strokeDasharray="1.500 1.500" /></Icon>
        <Cross className="size-2.5" />
        <Icon className="size-4"><path d="M2 18L11 9" strokeWidth="4" /><path d="M18 5A5 5 0 1 1 14 2L12 6L15 8Z" fill="#b4b7bb" stroke="none" /></Icon>
      </div>
      <label className="flex h-full flex-1 items-center bg-[#bdbebf] pr-1 pl-1 text-[#555]">
        <Icon className="size-4"><path d="M1 3H19V17H1ZM1 5H19M4 8L7 10.500L4 13M9 14H14" /></Icon>
        <Caret className="ml-0.5" />
        <input aria-label="Command" placeholder="Type a command" className='ml-[7px] min-w-0 flex-1 bg-transparent font-["Liberation_Mono",monospace] text-[12px] italic placeholder:text-[#5c5d5e]' />
        <Caret className="rotate-180" />
      </label>
    </div>
  );
}

function Group({ className = '', children }: { className?: string; children: React.ReactNode }) {
  return <div className={`flex h-6 shrink-0 items-center bg-[#3a4352] ${className}`}>{children}</div>;
}

const Person = ({ extra, className = '' }: { extra?: React.ReactNode; className?: string }) => (
  <Icon className={`size-5 ${className}`}><path d="M9 3L13.500 16L11 15L9 10L7 15L3 18Z" fill="#e8eaed" stroke="none" />{extra}</Icon>
);

function StatusBar() {
  return (
    <footer className="flex h-8 items-start pl-[23px] text-sm text-[#dfe3e8]">
      <Btn label="Layout list" className="mt-1.5"><Burger /></Btn>
      <button type="button" className="ml-2.5 h-6 w-[77px] bg-[#3b4453] text-center font-bold text-white [clip-path:polygon(9px_0,100%_0,calc(100%-9px)_100%,0_100%)]">Model</button>
      <button type="button" className="ml-[7px] h-6 w-[59px] text-left">Layout1</button>
      <span className="mt-1"><Slash /></span>
      <button type="button" className="ml-[9px] h-6 w-[59px] text-left">Layout2</button>
      <span className="mt-1"><Slash /></span>
      <Btn label="New layout" className="mt-[5px] ml-[11px]"><Plus /></Btn>
      <span className="mt-1 ml-3.5"><Slash /></span>

      <div className="mt-0.5 mr-[5px] ml-auto flex gap-[3px]">
        <Group className="w-[46px] justify-center text-[13px]"><button type="button">MODEL</button></Group>
        <Group className="w-[65px] gap-1 pl-0.5">
          <Icon><path d="M6 2V18M10 2V18M14 2V18M2 6H18M2 10H18M2 14H18" strokeWidth="1.200" /></Icon>
          <Icon><path d="M4 5H17M4 10H17M4 15H17" strokeDasharray="2 3" strokeWidth="2" /></Icon>
          <Caret />
        </Group>
        <Group className="w-[167px]">
          <Btn label="Ortho" className="w-6"><Icon className="size-[18px]"><path d="M4 1V17H19M4 12H9V17" /></Icon></Btn>
          <Btn label="Polar tracking" className="h-6 w-[21px] bg-[#5a8dc8] text-white"><Icon className="size-[18px]"><circle cx="9" cy="11" r="7.500" /><path d="M9 11L17 2M9 11H19M14 6V11" /></Icon></Btn>
          <Caret className="mr-[7px] ml-1.5" />
          <Icon><path d="M3 2L17 18" stroke="#f07f8e" /><path d="M10 1V19" stroke="#4fbf6b" /><path d="M8 8L13 13" stroke="#fff" /></Icon>
          <Caret className="mr-1.5 ml-1" />
          <Btn label="Object snap tracking" className="h-6 w-[21px] bg-[#5a8dc8] text-white"><Icon className="size-[18px]"><path d="M17 3L3 16H19M9 10V16" /></Icon></Btn>
          <Btn label="Object snap" className="ml-[3px] h-6 w-[22px] bg-[#5a8dc8] text-white"><Icon className="size-[18px]"><path d="M4 7V18H18V4H8M1 1H7V7H1Z" /></Icon></Btn>
          <Caret className="ml-1.5" />
        </Group>
        <Group className="ml-px w-[133px]">
          <Btn label="Annotation visibility" className="h-6 w-[22px] bg-[#5a8dc8] text-white"><Person extra={<circle cx="16" cy="5" r="2.500" />} /></Btn>
          <Person className="ml-[3px]" extra={<path d="M16 2L13 6H17L14 10" />} />
          <Person className="ml-[5px]" />
          <button type="button" className="ml-1.5 flex items-center gap-1 text-[13px] whitespace-nowrap">1" = 20'<Caret /></button>
        </Group>
        <Group className="w-[39px] gap-1.5 pl-1"><Gear className="size-[15px]" /><Caret className="ml-1" /></Group>
        <Group className="w-[23px] justify-center"><Plus /></Group>
        <Group className="w-[25px] justify-center"><Icon className="size-[18px]"><path d="M2 2H8V8H2ZM7 12L10.500 18H3.500Z" /><circle cx="15" cy="9" r="3" /></Icon></Group>
        <Group className="w-[74px] pl-[3px]">
          <Icon><path d="M10 7L17 11L10 15L3 11Z" fill="#4aa5ea" stroke="none" /><path d="M3 13L10 17L17 13V15L10 19L3 15Z" fill="#dfe2e6" stroke="none" /><path d="M5 6C6 1 14 1 15 6" strokeDasharray="1.500 1.500" /></Icon>
          <span className="ml-1.5 text-[13px]">3.5000</span>
        </Group>
        <Group className="w-16">
          <Icon className="ml-0.5 size-5"><path d="M2 6V2H6M14 2H18V6M2 14V18H6M18 14V18H14" /><path d="M6 14L7 9L12 4H15V8L10 13Z" fill="#5db7f2" stroke="#dfe2e6" strokeWidth="1" /></Icon>
          <Caret className="ml-1.5" />
          <Btn label="Isolate objects" className="ml-auto h-6 w-6 bg-[#5a8dc8] text-white"><Icon><path d="M3 13L11 3L17 6L16 12L8 18Z" fill="#fff" stroke="none" /><path d="M8 13L12 8M11 14L14 9" stroke="#5a8dc8" /></Icon></Btn>
        </Group>
        <Group className="w-[57px] justify-around">
          <Icon><path d="M4 1H16V9H4Z" fill="#2c6fb5" stroke="none" /><path d="M9 0V9M2 6H16" stroke="#fff" /><path d="M2 10H11V17H2Z" fill="#f7b928" stroke="none" /><path d="M10 14L13 17L18 10" stroke="#69c241" strokeWidth="2" /></Icon>
          <Icon><path d="M3 3H14L17 6V15H3Z" fill="#cfd2d6" stroke="none" /><path d="M3 12L7 6L11 12L14 6" stroke="#555" /><path d="M14 10L19 19H9Z" fill="#f5a06a" stroke="none" /></Icon>
        </Group>
        <Group className="w-[23px] justify-center"><Icon className="size-[18px]"><path d="M1 3H19V17H1Z" /><path d="M11 9L15 6M12 6H15V9M9 11L5 14M5 11V14H8" /></Icon></Group>
        <Group className="w-[25px] justify-center"><Icon><path d="M2 3H18M2 10H18M2 17H18" strokeWidth="1.800" /></Icon></Group>
      </div>
    </footer>
  );
}

/* ---------- docked palettes ---------- */

function PaletteControls() {
  return (
    <div className="flex flex-col items-center gap-[7px] pt-1 text-[#c3c7cc]">
      <Btn label="Close palette" className="size-3"><Icon className="size-[9px]" vb="0 0 12 12"><path d="M1 1L11 11M11 1L1 11" strokeWidth="2.600" /></Icon></Btn>
      <Btn label="Auto-hide" className="size-3"><Icon className="size-2.5" vb="0 0 12 12"><path d="M1 1V11M1 6H10M6 2.500L10 6L6 9.500" strokeWidth="1.600" /></Icon></Btn>
      <Btn label="Palette properties" className="size-3"><Gear className="size-2.5" /></Btn>
    </div>
  );
}

/* ---------- callouts ---------- */

function Callouts() {
  return (
    <svg viewBox="0 0 1920 1080" className="pointer-events-none absolute top-0 left-0 h-[1080px] w-[1920px]" role="img" aria-label="Callouts">
      <path
        d="M150 499C85 530 44 595 43.500 655C44 740 125 806 206 806L209 791C140 788 60.500 735 60.500 655C60.500 600 95 545 157 513L165 528L208 482C185 480 160 480 141 483Z"
        fill="#0576ae" stroke="#e8eef2" strokeWidth="1.500"
      />
      <g stroke="#0580c0" strokeWidth="5" strokeLinecap="round">
        <path d="M207.500 705V784M207.500 792V875M249.500 805V826M249.500 935V957M992.500 626V648M994.500 756V779M1659.500 248V540" />
        <path d="M186 674.500Q200 677 337 674.500M238 857.500H341M194 903.500Q210 906 343 904M971 677.500H1046M971 724.500H1045" stroke="#066ea6" opacity=".92" />
      </g>
      <path d="M207.500 678L218.500 708H196.500ZM207.500 902L218.500 872H196.500ZM249.500 855L260.500 826H238.500ZM249.500 908L260.500 936H238.500ZM992.500 675L1003.500 646H981.500ZM994.500 728L1005.500 758H983.500ZM1659.500 219L1670.500 250H1648.500Z" fill="#0580c0" />
      <g
        className='font-["Open_Sans",sans-serif] font-bold [paint-order:stroke] drop-shadow-[1px_2px_2px_rgba(0,0,0,0.5)]'
        stroke="#fff" strokeWidth="7" strokeLinejoin="round" fontSize="47"
      >
        <text x="409" y="238" fill="#f9572b">Type 1: Indirect control</text>
        <g fill="#0580c0" fontSize="46">
          <text x="147" y="469">Section view height: Automatically calculated</text>
          <text x="426" y="712">upper space: Set by user</text>
          <text x="385" y="897">lower space: Set by user</text>
        </g>
        <g fill="#00807f" fontSize="33" strokeWidth="6">
          <text x="1301" y="160">Plot scale: 1"=20'</text>
          <text x="1300" y="202">0.5" paper = 10' ft model</text>
        </g>
      </g>
    </svg>
  );
}

export default function App() {
  return (
    <div className={`relative flex min-h-screen w-full flex-col overflow-hidden bg-[#f4f6f8] pt-0.5 pr-0.5 pb-0.5 pl-[3px] ${OS}`}>
      <span className="absolute top-0 left-[229px] h-0.5 w-[95px] bg-[#f5f08a]" />
      <span className="absolute top-[23px] left-0 h-[23px] w-[3px] bg-[#0f6cb8]" />
      <div className="flex flex-1 flex-col border-t-2 border-r border-b border-[#1492d4] bg-[#222830]">
        <TitleBar />
        <MenuBar />
        <RibbonTabs />
        <Ribbon />
        <DocTabs />
        <main className="flex min-h-[830px] flex-1">
          <div className="relative min-w-0 flex-1 overflow-hidden">
            <Drawing />
            <p className="pt-1 pl-6 text-[11px] leading-5 text-[#e6e9ed]">[Top][2D Wireframe]</p>
            <aside className="absolute top-[102px] left-[66px] flex h-[665px] w-6 flex-col items-center bg-[#2e3441]">
              <PaletteControls />
              <span className="mt-auto rotate-180 text-sm leading-6 text-[#a9aeb6] [writing-mode:vertical-rl]">PROPERTIES</span>
              <Icon className="mt-2.5 mb-px size-4"><rect x="3" y="1" width="14" height="18" fill="#d9dde2" stroke="none" /><path d="M6 4H14V9H6Z" fill="#7cc8ff" stroke="#334" /><path d="M6 12V18M10 12V18M14 12V18" stroke="#555" /></Icon>
            </aside>
            <CommandLine />
            <Dialog />
          </div>
          <ToolStrip />
          <span className="w-[3px] bg-[#252b34]" />
        </main>
        <span className="h-1 bg-[#3b4453]" />
        <StatusBar />
      </div>
      <aside className="absolute top-[115px] bottom-0 left-0 flex w-[25px] flex-col items-center rounded-tr-[3px] bg-[#2e3441]">
        <PaletteControls />
        <span className="mt-auto rotate-180 text-sm leading-6 text-[#a9aeb6] [writing-mode:vertical-rl]">TOOLSPACE</span>
        <Icon className="mt-2 mb-1 size-4"><path d="M3 4L16 18" stroke="#dcdcdc" strokeWidth="2.500" /><path d="M16 4L3 18" stroke="#e0a57a" strokeWidth="2.500" /><path d="M1 6L5 1L8 4L4 8ZM13 2L18 7" stroke="#dcdcdc" strokeWidth="1.500" /></Icon>
      </aside>
      <Callouts />
    </div>
  );
}
